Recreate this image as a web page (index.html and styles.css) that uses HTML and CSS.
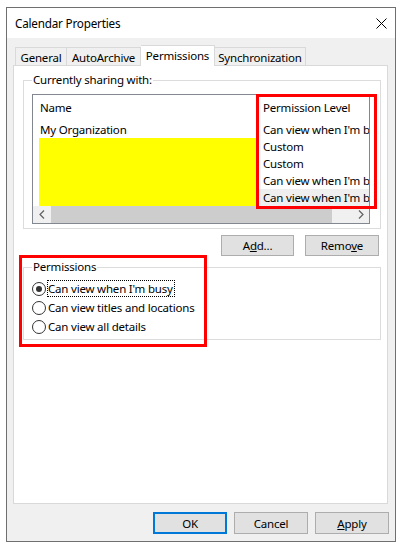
FILE: index.html
```html
<!DOCTYPE html>
<html lang="en">
<head>
  <meta charset="UTF-8">
  <meta name="viewport" content="width=device-width, initial-scale=1.0">
  <title>Calendar Properties</title>
  <link rel="stylesheet" href="styles.css">
</head>
<body>
  <div class="dialog">
    <div class="titlebar">
      <span class="title">Calendar Properties</span>
      <svg class="close" width="11" height="11" viewBox="0 0 11 11"><path d="M0.5 0.5L10.5 10.5M10.5 0.5L0.5 10.5" stroke="#000" stroke-width="1" fill="none"/></svg>
    </div>

    <div class="tabs">
      <div class="tab tab-general">General</div>
      <div class="tab tab-archive">AutoArchive</div>
      <div class="tab tab-perm active">Permissions</div>
      <div class="tab tab-sync">Synchronization</div>
    </div>

    <div class="panel">
      <fieldset class="group">
        <legend>Currently sharing with:</legend>
        <div class="listview">
          <div class="cell head name">Name</div>
          <div class="cell head perm">Permission Level</div>

          <div class="cell name">My Organization</div>
          <div class="cell perm">Can view when I'm b</div>

          <div class="cell name"><div class="redacted"></div></div>
          <div class="cell perm">Custom</div>

          <div class="cell name"><div class="redacted"></div></div>
          <div class="cell perm">Custom</div>

          <div class="cell name"><div class="redacted"></div></div>
          <div class="cell perm">Can view when I'm b</div>

          <div class="cell name"><div class="redacted"></div></div>
          <div class="cell perm selected">Can view when I'm b</div>

          <div class="hscroll">
            <div class="arrow">
              <svg width="6" height="9" viewBox="0 0 6 9"><path d="M5 0.5L1 4.5L5 8.5" stroke="#606060" stroke-width="1.2" fill="none"/></svg>
            </div>
            <div class="track"><div class="thumb"></div></div>
            <div class="arrow">
              <svg width="6" height="9" viewBox="0 0 6 9"><path d="M1 0.5L5 4.5L1 8.5" stroke="#606060" stroke-width="1.2" fill="none"/></svg>
            </div>
          </div>

          <div class="mark mark-levels"></div>
        </div>
      </fieldset>

      <div class="row-buttons">
        <button class="btn btn-add">A<u>d</u>d...</button>
        <button class="btn btn-remove">Remo<u>v</u>e</button>
      </div>

      <fieldset class="group group-perm">
        <legend>Permissions</legend>
        <div class="radio-row">
          <span class="radio checked"><span class="dot"></span></span>
          <span class="radio-label focus">Can view when I'm busy</span>
        </div>
        <div class="radio-row">
          <span class="radio"></span>
          <span class="radio-label">Can view titles and locations</span>
        </div>
        <div class="radio-row">
          <span class="radio"></span>
          <span class="radio-label">Can view all details</span>
        </div>
      </fieldset>

      <div class="mark mark-perm"></div>
    </div>

    <div class="footer">
      <button class="btn btn-ok">OK</button>
      <button class="btn">Cancel</button>
      <button class="btn"><u>A</u>pply</button>
    </div>
  </div>
</body>
</html>
```

FILE: styles.css
```css
body { margin: 0; background: #fff; font-family: "Noto Sans", "Open Sans", sans-serif; font-size: 11.5px; letter-spacing: -0.2px; color: #000; }

.dialog { box-sizing: border-box; width: 390px; height: 535px; margin: 7px 0 0 6px; border: 1px solid #6f6f6f; background: #f0f0f0; display: flex; flex-direction: column; }

.titlebar { height: 30px; background: #fff; display: flex; align-items: center; justify-content: space-between; padding: 0 8px 0 8px; }
.title { font-size: 11.7px; }
.close { display: block; }

.tabs { display: flex; align-items: flex-end; padding: 7px 0 0 8px; height: 20px; }
.tab { box-sizing: border-box; height: 18px; border: 1px solid #d9d9d9; border-bottom: none; border-left: none; text-align: center; line-height: 17px; padding-top: 1px; white-space: nowrap; }
.tab-general { width: 52px; border-left: 1px solid #d9d9d9; }
.tab-archive { width: 74px; }
.tab-perm { width: 74px; }
.tab-sync { width: 91px; }
.tab.active { height: 21px; background: #fff; margin-bottom: -1px; position: relative; z-index: 1; padding-top: 0; line-height: 19px; }

.panel { flex: 1; margin: 0 7px 0 6px; background: #fff; border: 1px solid #d9d9d9; position: relative; }

.group { margin: 6px 6px 0 9px; padding: 6px 10px 4px 8px; border: 1px solid #dcdcdc; min-width: 0; }
.group legend { padding: 0 1px; line-height: 16px; }
.group-perm { margin-top: 3px; padding: 4px 8px 3px 8px; }

.listview { border: 1px solid #828790; display: grid; grid-template-columns: 224px 1fr; grid-template-rows: 26px repeat(5, 17px) 17px; position: relative; }
.cell { overflow: hidden; white-space: nowrap; line-height: 17px; }
.cell.name { padding-left: 7px; }
.cell.perm { margin-left: 2px; padding-left: 4px; }
.cell.head { line-height: 25px; }
.cell.selected { background: #efefef; }
.redacted { height: 17px; margin-left: -1px; background: #ffff00; }

.hscroll { grid-column: 1 / -1; display: flex; background: #f0f0f0; }
.arrow { width: 17px; display: flex; align-items: center; justify-content: center; }
.track { flex: 1; padding-left: 1px; }
.thumb { width: 281px; height: 17px; background: #cdcdcd; }

.mark { position: absolute; box-sizing: border-box; border: 3px solid #ff0000; }
.mark-levels { left: 223px; top: -1px; width: 121px; height: 115px; }
.mark-perm { left: 5px; top: 189px; width: 188px; height: 92px; }

.row-buttons { display: flex; justify-content: flex-end; gap: 11px; margin: 6px 8px 0 0; }

.btn { box-sizing: border-box; width: 74px; height: 21px; padding: 0; background: #e1e1e1; border: 1px solid #adadad; font-family: inherit; font-size: 11.5px; letter-spacing: -0.2px; color: #000; }
.btn-add { width: 73px; }

.radio-row { display: flex; align-items: center; height: 19px; }
.radio { box-sizing: border-box; width: 14px; height: 14px; border: 1px solid #333; border-radius: 50%; background: #fff; display: flex; align-items: center; justify-content: center; }
.radio .dot { width: 6px; height: 6px; border-radius: 50%; background: #333; }
.radio-label { margin-left: 1px; border: 1px dotted transparent; line-height: 15px; padding-right: 1px; }
.radio-label.focus { border-color: #000; }

.footer { display: flex; justify-content: flex-end; gap: 7px; padding: 8px 6px 7px 0; }
.btn-ok { height: 22px; border: 2px solid #0078d7; }
.footer .btn { height: 22px; }
```
